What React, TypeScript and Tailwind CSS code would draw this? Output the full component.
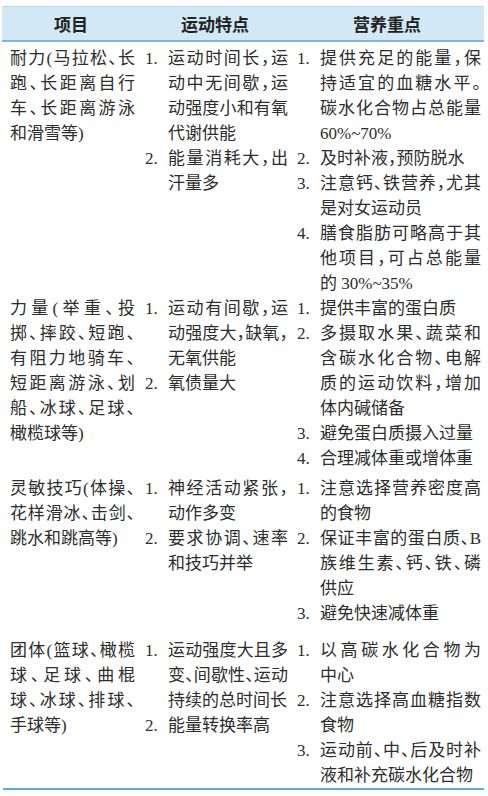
import React from "react";

type Item = { n: string; lines: string[] };
type Row = { name: string[]; traits: Item[]; diet: Item[]; gap: string };

const rows: Row[] = [
  {
    name: ["耐力(马拉松、长", "跑、长距离自行", "车、长距离游泳", "和滑雪等)"],
    traits: [
      { n: "1.", lines: ["运动时间长，运", "动中无间歇，运", "动强度小和有氧", "代谢供能"] },
      { n: "2.", lines: ["能量消耗大，出", "汗量多"] },
    ],
    diet: [
      { n: "1.", lines: ["提供充足的能量，保", "持适宜的血糖水平。", "碳水化合物占总能量", "60%~70%"] },
      { n: "2.", lines: ["及时补液，预防脱水"] },
      { n: "3.", lines: ["注意钙、铁营养，尤其", "是对女运动员"] },
      { n: "4.", lines: ["膳食脂肪可略高于其", "他项目，可占总能量", "的 30%~35%"] },
    ],
    gap: "pb-0",
  },
  {
    name: ["力量(举重、投", "掷、摔跤、短跑、", "有阻力地骑车、", "短距离游泳、划", "船、冰球、足球、", "橄榄球等)"],
    traits: [
      { n: "1.", lines: ["运动有间歇，运", "动强度大，缺氧，", "无氧供能"] },
      { n: "2.", lines: ["氧债量大"] },
    ],
    diet: [
      { n: "1.", lines: ["提供丰富的蛋白质"] },
      { n: "2.", lines: ["多摄取水果、蔬菜和", "含碳水化合物、电解", "质的运动饮料，增加", "体内碱储备"] },
      { n: "3.", lines: ["避免蛋白质摄入过量"] },
      { n: "4.", lines: ["合理减体重或增体重"] },
    ],
    gap: "pb-[5px]",
  },
  {
    name: ["灵敏技巧(体操、", "花样滑冰、击剑、", "跳水和跳高等)"],
    traits: [
      { n: "1.", lines: ["神经活动紧张，", "动作多变"] },
      { n: "2.", lines: ["要求协调、速率", "和技巧并举"] },
    ],
    diet: [
      { n: "1.", lines: ["注意选择营养密度高", "的食物"] },
      { n: "2.", lines: ["保证丰富的蛋白质、B", "族维生素、钙、铁、磷", "供应"] },
      { n: "3.", lines: ["避免快速减体重"] },
    ],
    gap: "pb-[12px]",
  },
  {
    name: ["团体(篮球、橄榄", "球、足球、曲棍", "球、冰球、排球、", "手球等)"],
    traits: [
      { n: "1.", lines: ["运动强度大且多", "变、间歇性、运动", "持续的总时间长"] },
      { n: "2.", lines: ["能量转换率高"] },
    ],
    diet: [
      { n: "1.", lines: ["以高碳水化合物为", "中心"] },
      { n: "2.", lines: ["注意选择高血糖指数", "食物"] },
      { n: "3.", lines: ["运动前、中、后及时补", "液和补充碳水化合物"] },
    ],
    gap: "pb-0",
  },
];

function Lines({ lines }: { lines: string[] }) {
  return (
    <>
      {lines.map((t, i) =>
        i < lines.length - 1 ? (
          <div key={i} className="text-justify [text-align-last:justify]">
            {t}
          </div>
        ) : (
          <div key={i} className="whitespace-nowrap">
            {t}
          </div>
        )
      )}
    </>
  );
}

function List({ items, width }: { items: Item[]; width: string }) {
  return (
    <div className="flex flex-col">
      {items.map((it, i) => (
        <div key={i} className="flex">
          <span className="w-[23px] shrink-0">{it.n}</span>
          <div className={width}>
            <Lines lines={it.lines} />
          </div>
        </div>
      ))}
    </div>
  );
}

export default function App() {
  return (
    <div className="w-[488px] h-[796px] bg-white text-[#2d2d2d] font-['Liberation_Serif','Noto_Sans_CJK_SC',serif] text-[17px] [font-feature-settings:'halt'] overflow-hidden">
      {/* header */}
      <div className="mt-[6px] mx-[2px] w-[482px] h-[36px] grid grid-cols-[138px_150px_1fr] items-center bg-[#d2e9f5] border-t border-[#b3d9ea] border-b-2 border-b-[#78bad7] font-['Noto_Sans_CJK_SC',sans-serif] font-bold text-[#222]">
        <div className="text-center">项目</div>
        <div className="text-center">运动特点</div>
        <div className="text-center">营养重点</div>
      </div>

      {/* body */}
      <div className="pt-[4px] leading-[25px]">
        {rows.map((r, i) => (
          <div key={i} className={`grid grid-cols-[145px_152px_1fr] ${r.gap}`}>
            <div className="pl-[10px]">
              <div className="w-[125px]">
                <Lines lines={r.name} />
              </div>
            </div>
            <List items={r.traits} width="w-[120px]" />
            <List items={r.diet} width="w-[161px]" />
          </div>
        ))}
      </div>

      <div className="mx-[3px] w-[481px] h-[2px] bg-[#52b2d9]" />
    </div>
  );
}
